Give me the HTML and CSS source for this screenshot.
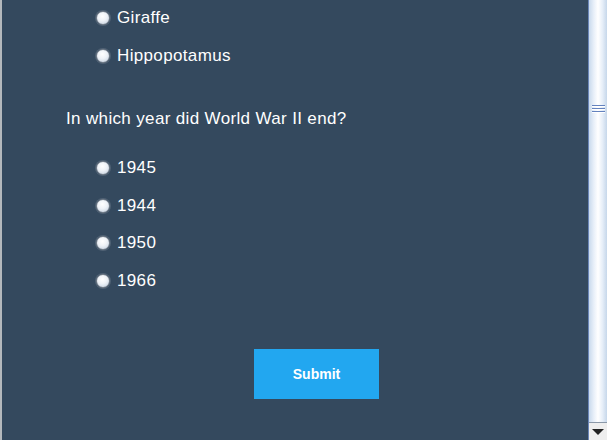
FILE: index.html
```html
<!DOCTYPE html>
<html>
<head>
<meta charset="utf-8">
<link rel="stylesheet" href="styles.css">
</head>
<body>
<div class="window">
  <div class="edge"></div>
  <main class="content">
    <div class="options first">
      <label class="option"><span class="radio"></span><span>Giraffe</span></label>
      <label class="option"><span class="radio"></span><span>Hippopotamus</span></label>
    </div>
    <p class="question">In which year did World War II end?</p>
    <div class="options">
      <label class="option"><span class="radio"></span><span>1945</span></label>
      <label class="option"><span class="radio"></span><span>1944</span></label>
      <label class="option"><span class="radio"></span><span>1950</span></label>
      <label class="option"><span class="radio"></span><span>1966</span></label>
    </div>
    <div class="actions">
      <button class="submit">Submit</button>
    </div>
  </main>
  <div class="scrollbar">
    <div class="thumb">
      <div class="grip">
        <span></span><span></span><span></span>
      </div>
    </div>
    <div class="arrow-btn"><span class="arrow"></span></div>
  </div>
</div>
</body>
</html>
```

FILE: styles.css
```css
html, body {
  margin: 0;
  padding: 0;
  width: 607px;
  height: 440px;
  overflow: hidden;
}

.window {
  display: flex;
  width: 607px;
  height: 440px;
  background: #34495e;
  font-family: "Liberation Sans", Arial, sans-serif;
  color: #ffffff;
}

.edge {
  width: 2px;
  background: #b4b8bc;
  flex: none;
}

.content {
  flex: 1;
  display: flex;
  flex-direction: column;
}

.options {
  display: flex;
  flex-direction: column;
  gap: 1.67px;
  padding-left: 94px;
}

.options.first {
  gap: 2px;
}

.option {
  display: flex;
  align-items: center;
  gap: 7px;
  height: 36px;
  font-size: 17px;
  letter-spacing: 0.35px;
}

.radio {
  width: 12px;
  height: 12px;
  border-radius: 50%;
  border: 1px solid #76808c;
  background: radial-gradient(circle at 45% 35%, #ffffff 0%, #eef2f7 45%, #bccadb 100%);
  box-shadow: 0 0 0 1px rgba(150, 160, 172, 0.3);
  flex: none;
}

.question {
  margin: 35px 0 21px 64px;
  height: 20px;
  line-height: 20px;
  font-size: 17px;
  letter-spacing: 0.35px;
}

.actions {
  padding: 50px 0 0 252px;
}

.submit {
  width: 125px;
  height: 50px;
  border: none;
  background: #22a7f0;
  color: #ffffff;
  font-family: "Liberation Sans", Arial, sans-serif;
  font-weight: bold;
  font-size: 14px;
  padding: 0;
}

.scrollbar {
  width: 19px;
  height: 440px;
  flex: none;
  display: flex;
  flex-direction: column;
  border-left: 1px solid #6b86b8;
  box-sizing: border-box;
}

.thumb {
  flex: 1;
  background: linear-gradient(to right, #c8d9ec 0%, #e6eef8 25%, #ffffff 50%, #e6eef8 75%, #c6d7ea 100%);
  padding-top: 105px;
}

.grip {
  display: flex;
  flex-direction: column;
  gap: 1px;
  margin-left: 3px;
  width: 13px;
}

.grip span {
  height: 1px;
  background: #6382bf;
  border-bottom: 1px solid #ffffff;
}

.arrow-btn {
  height: 18px;
  flex: none;
  background: #eeeeee;
  border-top: 1px solid #8b98a8;
  box-sizing: border-box;
  display: flex;
  align-items: center;
  justify-content: center;
}

.arrow {
  width: 0;
  height: 0;
  border-left: 6px solid transparent;
  border-right: 6px solid transparent;
  border-top: 6px solid #222222;
}
```
